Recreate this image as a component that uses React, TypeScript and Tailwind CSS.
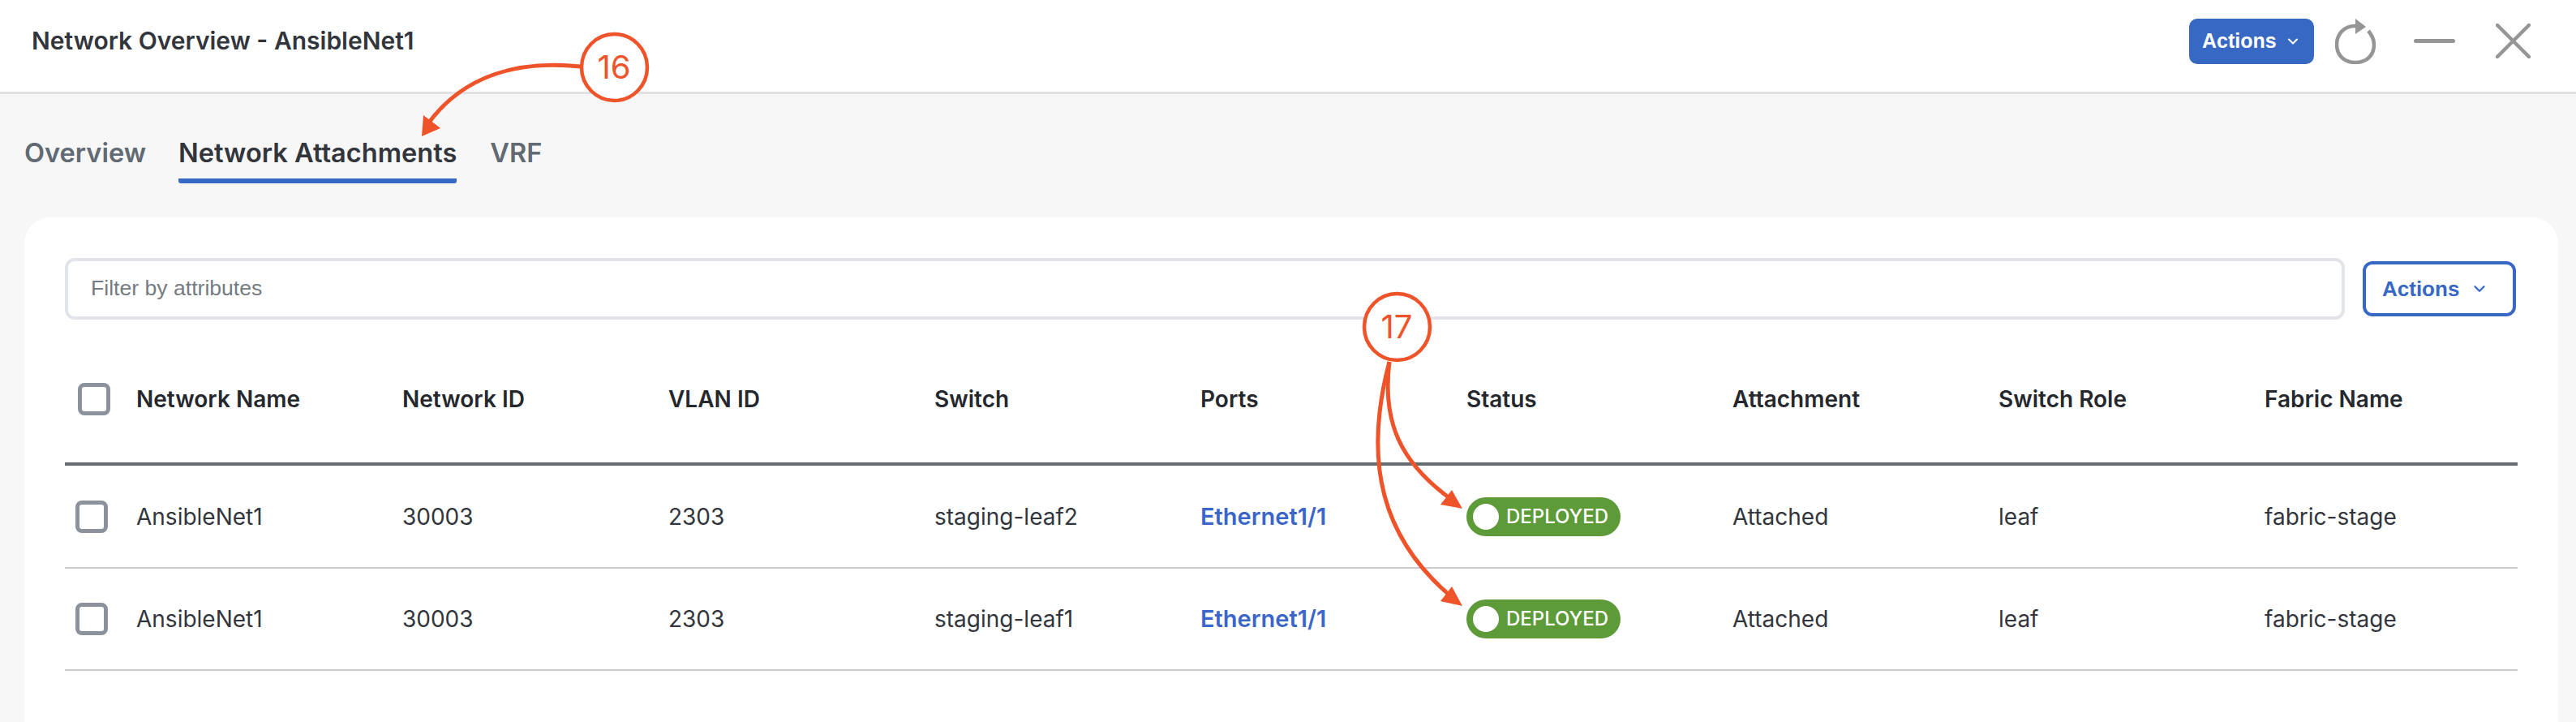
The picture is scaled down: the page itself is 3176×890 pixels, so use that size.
import { ChevronDown } from 'lucide-react';

const COLUMNS = ['Network Name', 'Network ID', 'VLAN ID', 'Switch', 'Ports', 'Status', 'Attachment', 'Switch Role', 'Fabric Name'];

const ROWS = [
  { name: 'AnsibleNet1', id: '30003', vlan: '2303', sw: 'staging-leaf2', port: 'Ethernet1/1', attachment: 'Attached', role: 'leaf', fabric: 'fabric-stage' },
  { name: 'AnsibleNet1', id: '30003', vlan: '2303', sw: 'staging-leaf1', port: 'Ethernet1/1', attachment: 'Attached', role: 'leaf', fabric: 'fabric-stage' },
];

const ORANGE = '#ef5329';

function Checkbox({ className }: { className: string }) {
  return <div className={`w-[40px] h-[40px] shrink-0 rounded-[8px] border-[5px] border-[#8b929b] bg-white ${className}`} />;
}

function Annotations() {
  return (
    <svg className="absolute left-0 top-0 pointer-events-none" width="3176" height="890" viewBox="0 0 3176 890" fill="none">
      {/* 16 callout */}
      <path d="M716 82 C640 74 572 92 528 152" stroke={ORANGE} strokeWidth="5" />
      <polygon points="522,142 543,158 520,168" fill={ORANGE} />
      <ellipse cx="757.5" cy="83" rx="40.5" ry="41" fill="white" stroke={ORANGE} strokeWidth="4.5" />
      <text x="757" y="97" textAnchor="middle" fontSize="40" fontFamily="Inter, sans-serif" fill={ORANGE}>16</text>

      {/* 17 callout */}
      <path d="M1713 446 C1704 520 1726 570 1790 616" stroke={ORANGE} strokeWidth="5" />
      <polygon points="1790,604 1803,627 1776,622" fill={ORANGE} />
      <path d="M1713 446 C1680 570 1704 664 1790 736" stroke={ORANGE} strokeWidth="5" />
      <polygon points="1790,723 1803,747 1776,741" fill={ORANGE} />
      <ellipse cx="1722.5" cy="403" rx="40.5" ry="41" fill="white" stroke={ORANGE} strokeWidth="4.5" />
      <text x="1722" y="417" textAnchor="middle" fontSize="40" fontFamily="Inter, sans-serif" fill={ORANGE}>17</text>
    </svg>
  );
}

function Cell({ children }: { children: React.ReactNode }) {
  return <div className="w-[328px] shrink-0 truncate">{children}</div>;
}

export default function App() {
  return (
    <div className="relative w-[3176px] h-[890px] overflow-hidden bg-[#f7f7f7] font-['Inter',sans-serif]">
      {/* Header */}
      <div className="flex items-center justify-between h-[116px] bg-white border-b-[3px] border-[#e1e1e1] pl-[39px] pr-[56px]">
        <div className="text-[30px] font-semibold text-[#32363c] mb-[13px]">Network Overview - AnsibleNet1</div>
        <div className="flex items-center mb-[12px]">
          <button className="flex items-center w-[154px] h-[56px] bg-[#3668c4] rounded-[10px] pl-[16px] text-white text-[25px] font-bold font-['Liberation_Sans',sans-serif]">
            Actions
            <ChevronDown size={20} strokeWidth={2.5} className="ml-[10px]" />
          </button>
          <svg className="ml-[26px]" width="50" height="56" viewBox="0 0 50 56" fill="none">
            <path d="M25 9 C 11 9 2 19 2 32 C 2 45 11 54 25 54 C 39 54 48 45 48 32 C 48 26 45.5 20.5 41 15" stroke="#959595" strokeWidth="4.5" />
            <polygon points="25,0 38,10 25,19" fill="#959595" />
          </svg>
          <div className="ml-[47px] w-[51px] h-[5px] rounded-full bg-[#959595]" />
          <svg className="ml-[50px]" width="43" height="43" viewBox="0 0 43 43" fill="none">
            <path d="M2 2 L41 41 M41 2 L2 41" stroke="#959595" strokeWidth="4.5" strokeLinecap="round" />
          </svg>
        </div>
      </div>

      {/* Tabs */}
      <div className="flex items-start h-[152px] pl-[30px] text-[32.6px] font-semibold text-[#626a73]">
        <div className="mt-[48px]">Overview</div>
        <div className="ml-[40px] mt-[48px] pb-[7px] border-b-[6px] border-[#3668c4] rounded-b-[3px] text-[#32363c]">Network Attachments</div>
        <div className="ml-[41px] mt-[48px]">VRF</div>
      </div>

      {/* Card */}
      <div className="ml-[30px] w-[3124px] h-[622px] bg-white rounded-t-[32px] pl-[50px] pr-[50px] pt-[50px]">
        <div className="flex items-center gap-[22px]">
          <div className="flex items-center w-[2811px] h-[76px] shrink-0 border-4 border-[#e1e4e8] rounded-[12px] pl-[28px] text-[26.6px] text-[#757b82] font-['Liberation_Sans',sans-serif]">
            Filter by attributes
          </div>
          <button className="flex items-center w-[189px] h-[68px] shrink-0 border-4 border-[#3668c4] rounded-[12px] pl-[20px] text-[26px] font-bold text-[#3668c4] font-['Liberation_Sans',sans-serif]">
            Actions
            <ChevronDown size={22} strokeWidth={2.5} className="ml-[14px]" />
          </button>
        </div>

        {/* Table */}
        <div className="w-[3024px]">
          <div className="flex items-center h-[180px] pt-[20px] border-b-4 border-[#646b72] text-[28px] font-semibold text-[#25282d]">
            <Checkbox className="ml-[16px] mr-[32px]" />
            {COLUMNS.map(c => <Cell key={c}>{c}</Cell>)}
          </div>
          {ROWS.map((r, i) => (
            <div key={r.sw} className={`flex items-center border-b-2 border-[#cbcbcb] text-[28px] text-[#32363c] ${i === 0 ? 'h-[127px]' : 'h-[126px]'}`}>
              <Checkbox className="ml-[13px] mr-[35px]" />
              <Cell>{r.name}</Cell>
              <Cell>{r.id}</Cell>
              <Cell>{r.vlan}</Cell>
              <Cell>{r.sw}</Cell>
              <Cell><span className="font-semibold text-[29px] text-[#3b66c9]">{r.port}</span></Cell>
              <Cell>
                <span className="flex items-center w-[190px] h-[48px] rounded-full bg-[#5d9a38] pl-[8px] text-[24px] font-medium text-white">
                  <span className="w-[32px] h-[32px] rounded-full bg-white mr-[9px]" />
                  DEPLOYED
                </span>
              </Cell>
              <Cell>{r.attachment}</Cell>
              <Cell>{r.role}</Cell>
              <Cell>{r.fabric}</Cell>
            </div>
          ))}
        </div>
      </div>

      <Annotations />
    </div>
  );
}
